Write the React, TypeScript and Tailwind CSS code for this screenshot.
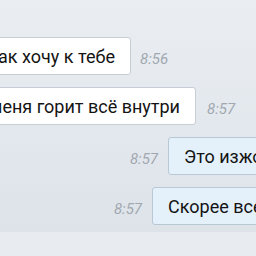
export default function App() {
  return (
    <div
      className="w-[256px] h-[256px] overflow-hidden flex flex-col bg-[#e8ecf1]"
      style={{ fontFamily: "Roboto, 'Noto Sans', sans-serif" }}
    >
      <div className="h-[232px] flex flex-col gap-[12px] pt-[37px] bg-gradient-to-b from-[#eaeef3] to-[#dde3e9]">
        <div className="flex items-center h-[38px]">
          <div className="w-[131px] shrink-0 flex justify-end">
            <div className="shrink-0 h-[38px] px-[15px] flex items-center bg-white border border-[#c6cdd5] rounded-[3px] text-[18px] text-[#141414] whitespace-nowrap">
              Как хочу к тебе
            </div>
          </div>
          <span className="ml-[9px] mt-[6px] italic text-[15px] text-[#a1a8b0] whitespace-nowrap">8:56</span>
        </div>
        <div className="flex items-center h-[38px]">
          <div className="w-[196px] shrink-0 flex justify-end">
            <div className="shrink-0 h-[38px] px-[15px] flex items-center bg-white border border-[#c6cdd5] rounded-[3px] text-[18px] text-[#141414] whitespace-nowrap">
              У меня горит всё внутри
            </div>
          </div>
          <span className="ml-[11px] mt-[6px] italic text-[15px] text-[#a1a8b0] whitespace-nowrap">8:57</span>
        </div>
        <div className="flex items-center h-[38px]">
          <div className="w-[168px] shrink-0 flex justify-end pr-[10px]">
            <span className="mt-[6px] italic text-[15px] text-[#a1a8b0] whitespace-nowrap">8:57</span>
          </div>
          <div className="shrink-0 h-[38px] px-[15px] flex items-center bg-[#e4f1fb] border border-[#b9c8d5] rounded-[3px] text-[18px] text-[#141414] whitespace-nowrap">
            Это изжога
          </div>
        </div>
        <div className="flex items-center h-[38px]">
          <div className="w-[152px] shrink-0 flex justify-end pr-[10px]">
            <span className="mt-[6px] italic text-[15px] text-[#a1a8b0] whitespace-nowrap">8:57</span>
          </div>
          <div className="shrink-0 h-[38px] px-[15px] flex items-center bg-[#e4f1fb] border border-[#b9c8d5] rounded-[3px] text-[18px] text-[#141414] whitespace-nowrap">
            Скорее всего
          </div>
        </div>
      </div>
    </div>
  );
}
